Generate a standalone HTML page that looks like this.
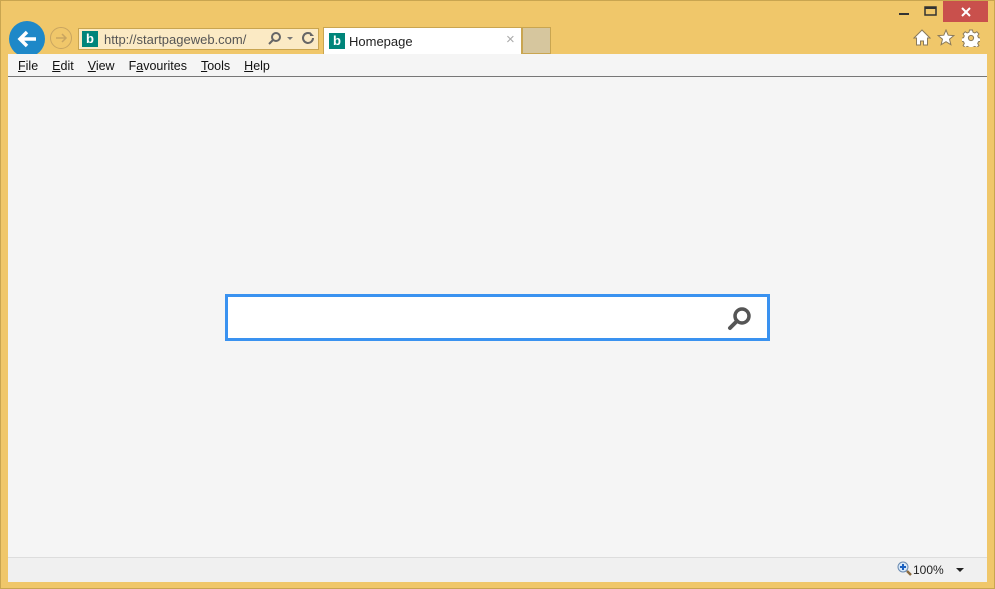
<!DOCTYPE html>
<html><head><style>
body{margin:0;width:995px;height:589px;background:#f0c76a;position:relative;overflow:hidden;font-family:"Liberation Sans",sans-serif}
.a{position:absolute}
.menu span{margin-right:14px}
.menu u{text-decoration:underline}
</style></head><body>
<div class="a" style="left:0;top:0;width:995px;height:589px;box-sizing:border-box;border:1px solid #c9a550"></div>
<div class="a" style="left:9px;top:21px;width:36px;height:36px;border-radius:50%;background:#1e88c8"></div>
<svg class="a" style="left:9px;top:21px" width="36" height="36"><path d="M27 18H11M18 11l-7 7 7 7" stroke="#fff" stroke-width="3.5" fill="none"/></svg>
<div class="a" style="left:50px;top:27px;width:22px;height:22px;border-radius:50%;border:1.5px solid #c9a560;box-sizing:border-box"></div>
<svg class="a" style="left:50px;top:27px" width="22" height="22"><path d="M6 11h10M12 7l4 4-4 4" stroke="#c9a560" stroke-width="1.5" fill="none"/></svg>
<div class="a" style="left:78px;top:28px;width:241px;height:22px;background:#fbeac4;border:1px solid #c9a550;box-sizing:border-box"></div>
<div class="a" style="left:82px;top:31px;width:16px;height:16px;background:#00857a;color:#fff;font-weight:bold;font-size:13px;line-height:16px;text-align:center">b</div>
<div class="a" style="left:104px;top:32px;font-size:13px;color:#555">http://startpageweb.com/</div>
<svg class="a" style="left:266px;top:30px" width="50" height="18"><circle cx="10" cy="7" r="4" stroke="#666" stroke-width="2" fill="none"/><path d="M7 10l-4 4" stroke="#666" stroke-width="2"/><path d="M21 7h6l-3 3z" fill="#777"/><path d="M47 8a5 5 0 1 1-2-4" stroke="#666" stroke-width="2" fill="none"/><path d="M44 2v4h4" fill="#666"/></svg>
<div class="a" style="left:323px;top:27px;width:199px;height:27px;background:#fff;border:1px solid #c9a550;border-bottom:none;box-sizing:border-box"></div>
<div class="a" style="left:329px;top:33px;width:16px;height:16px;background:#00857a;color:#fff;font-weight:bold;font-size:13px;line-height:16px;text-align:center">b</div>
<div class="a" style="left:349px;top:34px;font-size:13px;color:#222">Homepage</div>
<div class="a" style="left:506px;top:31px;font-size:15px;color:#aaa">×</div>
<div class="a" style="left:522px;top:27px;width:29px;height:27px;background:#d6c69e;border:1px solid #c9a550;box-sizing:border-box"></div>
<div class="a" style="left:899px;top:13px;width:10px;height:2px;background:#333"></div>
<svg class="a" style="left:924px;top:6px" width="14" height="11"><rect x="1" y="1" width="11" height="8" fill="none" stroke="#333" stroke-width="1.5"/><rect x="1" y="1" width="11" height="2" fill="#333"/></svg>
<div class="a" style="left:943px;top:1px;width:45px;height:21px;background:#c9504c"></div>
<svg class="a" style="left:960px;top:6px" width="12" height="12"><path d="M2 2l8 8M10 2l-8 8" stroke="#fff" stroke-width="2"/></svg>
<svg class="a" style="left:913px;top:29px" width="18" height="17"><path d="M9 1L1 9h2.5v7h4v-4h3v4h4V9H17z" fill="#fff" stroke="#8a7a5a" stroke-width="1"/></svg>
<svg class="a" style="left:937px;top:29px" width="18" height="17"><path d="M9 1l2.2 5.2 5.6.4-4.3 3.6 1.4 5.5L9 12.7l-4.9 3 1.4-5.5L1.2 6.6l5.6-.4z" fill="#fff" stroke="#8a7a5a" stroke-width="1"/></svg>
<svg class="a" style="left:962px;top:29px" width="18" height="18"><g transform="translate(9 9)"><path d="M-1.5-8h3l.5 2.2 1.8.8 2-1.2 2.1 2.1-1.2 2 .8 1.8 2.2.5v3l-2.2.5-.8 1.8 1.2 2-2.1 2.1-2-1.2-1.8.8-.5 2.2h-3l-.5-2.2-1.8-.8-2 1.2-2.1-2.1 1.2-2-.8-1.8-2.2-.5v-3l2.2-.5.8-1.8-1.2-2 2.1-2.1 2 1.2 1.8-.8z" fill="#fff" stroke="#8a7a5a"/><circle r="2.6" fill="#f0c76a" stroke="#8a7a5a"/></g></svg>
<div class="a" style="left:8px;top:54px;width:979px;height:527px;background:#f5f5f5"></div>
<div class="a menu" style="left:18px;top:59px;font-size:12.5px;color:#111"><span><u>F</u>ile</span><span><u>E</u>dit</span><span><u>V</u>iew</span><span>F<u>a</u>vourites</span><span><u>T</u>ools</span><span><u>H</u>elp</span></div>
<div class="a" style="left:8px;top:76px;width:979px;height:1px;background:#777"></div>
<div class="a" style="left:8px;top:557px;width:979px;height:24px;background:#f0f0f0;border-top:1px solid #ddd"></div>
<svg class="a" style="left:897px;top:561px" width="16" height="16"><circle cx="6" cy="6" r="5" fill="#d8e8f8" stroke="#6a8ab0"/><path d="M3 6h6M6 3v6" stroke="#1a60c0" stroke-width="2"/><path d="M10 10l4 4" stroke="#8a6a40" stroke-width="2.5"/></svg>
<div class="a" style="left:913px;top:563px;font-size:12px;color:#222">100%</div>
<div class="a" style="left:956px;top:568px;border:4px solid transparent;border-top:4px solid #222"></div>
<div class="a" style="left:225px;top:294px;width:545px;height:47px;border:3px solid #3a92f0;box-sizing:border-box;background:#fff"></div>
<svg class="a" style="left:726px;top:304px" width="30" height="28"><circle cx="16" cy="12" r="7" stroke="#555" stroke-width="3.5" fill="none"/><path d="M11 17l-7 7" stroke="#555" stroke-width="4" stroke-linecap="round"/></svg>
</body></html>
